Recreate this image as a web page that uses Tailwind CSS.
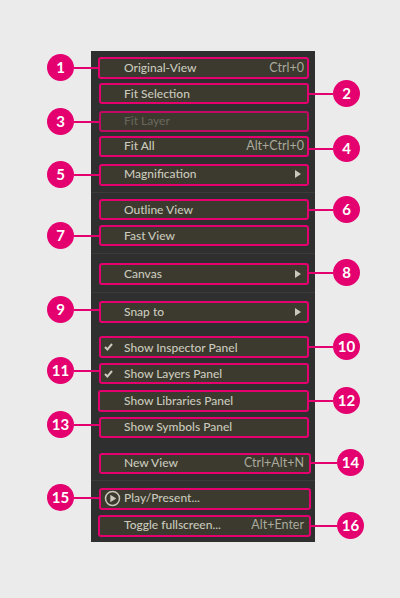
<!DOCTYPE html>
<html lang="en">
<head>
<meta charset="UTF-8">
<title>View menu</title>
<script src="https://cdn.jsdelivr.net/npm/@tailwindcss/browser@4"></script>
</head>
<body class="bg-[#ebebeb] font-['Lato',sans-serif]">
<div class="relative w-[400px] h-[598px] pt-[51px] pl-[91px] overflow-hidden">

  <!-- menu -->
  <div class="w-[224px] h-[491px] bg-[#2f2f2f] flow-root text-[12px] font-medium text-[#c9c9bd]">
    <div class="mt-[6px] ml-[7px] w-[211px] h-[22px] flex items-center justify-between pl-[24px] pr-[3px] bg-[#3c3a2e] border-2 border-[#e4006f] rounded-[3px]"><span>Original-View</span><span class="text-[#a9a99d] font-normal text-[12.5px]">Ctrl+0</span></div>
    <div class="mt-[4px] ml-[8px] w-[210px] h-[21px] flex items-center pl-[23px] bg-[#3c3a2e] border-2 border-[#e4006f] rounded-[3px]"><span>Fit Selection</span></div>
    <div class="mt-[7px] ml-[8px] w-[210px] h-[21px] flex items-center pl-[23px] pb-[2px] bg-[#3c3a2e] border-2 border-[#c20a64] rounded-[3px]"><span class="text-[#66665c]">Fit Layer</span></div>
    <div class="mt-[4px] ml-[8px] w-[210px] h-[21px] flex items-center justify-between pl-[23px] pr-[3px] pb-[1px] bg-[#3c3a2e] border-2 border-[#e4006f] rounded-[3px]"><span>Fit All</span><span class="text-[#a9a99d] font-normal text-[12.5px]">Alt+Ctrl+0</span></div>
    <div class="mt-[7px] ml-[8px] w-[210px] h-[22px] flex items-center justify-between pl-[23px] pr-[6px] pb-[2px] bg-[#3c3a2e] border-2 border-[#e4006f] rounded-[3px]"><span>Magnification</span><svg width="6" height="8" viewBox="0 0 6 8"><path d="M0 0 L6 4 L0 8 Z" fill="#c9c9bd"/></svg></div>
    <div class="mt-[6px] h-px bg-[#3a3a3a]"></div>
    <div class="mt-[6px] ml-[8px] w-[210px] h-[21px] flex items-center pl-[23px] bg-[#3c3a2e] border-2 border-[#e4006f] rounded-[3px]"><span>Outline View</span></div>
    <div class="mt-[5px] ml-[8px] w-[210px] h-[21px] flex items-center pl-[23px] bg-[#3c3a2e] border-2 border-[#e4006f] rounded-[3px]"><span>Fast View</span></div>
    <div class="mt-[7px] h-px bg-[#3a3a3a]"></div>
    <div class="mt-[9px] ml-[8px] w-[210px] h-[22px] flex items-center justify-between pl-[23px] pr-[6px] bg-[#3c3a2e] border-2 border-[#e4006f] rounded-[3px]"><span>Canvas</span><svg width="6" height="8" viewBox="0 0 6 8"><path d="M0 0 L6 4 L0 8 Z" fill="#c9c9bd"/></svg></div>
    <div class="mt-[7px] h-px bg-[#3a3a3a]"></div>
    <div class="mt-[8px] ml-[8px] w-[210px] h-[22px] flex items-center justify-between pl-[23px] pr-[6px] bg-[#3c3a2e] border-2 border-[#e4006f] rounded-[3px]"><span>Snap to</span><svg width="6" height="8" viewBox="0 0 6 8"><path d="M0 0 L6 4 L0 8 Z" fill="#c9c9bd"/></svg></div>
    <div class="mt-[13px] ml-[8px] w-[210px] h-[22px] flex items-center pl-[3px] bg-[#3c3a2e] border-2 border-[#e4006f] rounded-[3px]"><svg class="w-[9px] h-[8px] mr-[11px]" viewBox="0 0 9 8"><path d="M1 4 L3.4 6.5 L8 1" fill="none" stroke="#c9c9bd" stroke-width="2"/></svg><span class="mt-[1px]">Show Inspector Panel</span></div>
    <div class="mt-[5px] ml-[8px] w-[210px] h-[21px] flex items-center pl-[3px] bg-[#3c3a2e] border-2 border-[#e4006f] rounded-[3px]"><svg class="w-[9px] h-[8px] mr-[11px]" viewBox="0 0 9 8"><path d="M1 4 L3.4 6.5 L8 1" fill="none" stroke="#c9c9bd" stroke-width="2"/></svg><span>Show Layers Panel</span></div>
    <div class="mt-[6px] ml-[7px] w-[211px] h-[22px] flex items-center pl-[24px] pb-[1px] bg-[#3c3a2e] border-2 border-[#e4006f] rounded-[3px]"><span>Show Libraries Panel</span></div>
    <div class="mt-[5px] ml-[8px] w-[210px] h-[21px] flex items-center pl-[23px] pb-[2px] bg-[#3c3a2e] border-2 border-[#e4006f] rounded-[3px]"><span>Show Symbols Panel</span></div>
    <div class="mt-[15px] ml-[8px] w-[212px] h-[21px] flex items-center justify-between pl-[23px] pr-[5px] pb-[1px] bg-[#3c3a2e] border-2 border-[#e4006f] rounded-[3px]"><span>New View</span><span class="text-[#a9a99d] font-normal text-[12.5px]">Ctrl+Alt+N</span></div>
    <div class="mt-[6px] h-px bg-[#3a3a3a]"></div>
    <div class="mt-[7px] ml-[8px] w-[212px] h-[22px] flex items-center pl-[3px] pb-[1px] bg-[#3c3a2e] border-2 border-[#e4006f] rounded-[3px]"><svg class="w-[17px] h-[17px] mr-[3px]" viewBox="0 0 17 17"><circle cx="8.5" cy="8.5" r="7" fill="none" stroke="#c9c9bd" stroke-width="1.5"/><path d="M6.3 4.8 L12.3 8.5 L6.3 12.2 Z" fill="#c9c9bd"/></svg><span class="mb-[1px]">Play/Present...</span></div>
    <div class="mt-[5px] ml-[7px] w-[213px] h-[22px] flex items-center justify-between pl-[24px] pr-[5px] pb-[2px] bg-[#3c3a2e] border-2 border-[#e4006f] rounded-[3px]"><span>Toggle fullscreen...</span><span class="text-[#a9a99d] font-normal text-[12.5px]">Alt+Enter</span></div>
  </div>

  <!-- callouts -->
  <div class="absolute left-[47px] top-[54px] w-[52px] h-[27px] flex items-center"><span class="w-[27px] h-[27px] shrink-0 rounded-full bg-[#e4006f] text-white font-bold text-[15px] flex items-center justify-center">1</span><span class="flex-1 h-[2px] bg-[#e4006f]"></span></div>
  <div class="absolute left-[47px] top-[108px] w-[52px] h-[27px] flex items-center"><span class="w-[27px] h-[27px] shrink-0 rounded-full bg-[#e4006f] text-white font-bold text-[15px] flex items-center justify-center">3</span><span class="flex-1 h-[2px] bg-[#e4006f]"></span></div>
  <div class="absolute left-[47px] top-[161px] w-[52px] h-[27px] flex items-center"><span class="w-[27px] h-[27px] shrink-0 rounded-full bg-[#e4006f] text-white font-bold text-[15px] flex items-center justify-center">5</span><span class="flex-1 h-[2px] bg-[#e4006f]"></span></div>
  <div class="absolute left-[47px] top-[222px] w-[52px] h-[27px] flex items-center"><span class="w-[27px] h-[27px] shrink-0 rounded-full bg-[#e4006f] text-white font-bold text-[15px] flex items-center justify-center">7</span><span class="flex-1 h-[2px] bg-[#e4006f]"></span></div>
  <div class="absolute left-[47px] top-[296px] w-[52px] h-[27px] flex items-center"><span class="w-[27px] h-[27px] shrink-0 rounded-full bg-[#e4006f] text-white font-bold text-[15px] flex items-center justify-center">9</span><span class="flex-1 h-[2px] bg-[#e4006f]"></span></div>
  <div class="absolute left-[47px] top-[357px] w-[52px] h-[27px] flex items-center"><span class="w-[27px] h-[27px] shrink-0 rounded-full bg-[#e4006f] text-white font-bold text-[15px] flex items-center justify-center">11</span><span class="flex-1 h-[2px] bg-[#e4006f]"></span></div>
  <div class="absolute left-[47px] top-[411px] w-[52px] h-[27px] flex items-center"><span class="w-[27px] h-[27px] shrink-0 rounded-full bg-[#e4006f] text-white font-bold text-[15px] flex items-center justify-center">13</span><span class="flex-1 h-[2px] bg-[#e4006f]"></span></div>
  <div class="absolute left-[47px] top-[484px] w-[52px] h-[27px] flex items-center"><span class="w-[27px] h-[27px] shrink-0 rounded-full bg-[#e4006f] text-white font-bold text-[15px] flex items-center justify-center">15</span><span class="flex-1 h-[2px] bg-[#e4006f]"></span></div>

  <div class="absolute left-[309px] top-[80px] w-[51px] h-[27px] flex items-center"><span class="flex-1 h-[2px] bg-[#e4006f]"></span><span class="w-[27px] h-[27px] shrink-0 rounded-full bg-[#e4006f] text-white font-bold text-[15px] flex items-center justify-center">2</span></div>
  <div class="absolute left-[309px] top-[135px] w-[51px] h-[27px] flex items-center"><span class="flex-1 h-[2px] bg-[#e4006f]"></span><span class="w-[27px] h-[27px] shrink-0 rounded-full bg-[#e4006f] text-white font-bold text-[15px] flex items-center justify-center">4</span></div>
  <div class="absolute left-[309px] top-[196px] w-[51px] h-[27px] flex items-center"><span class="flex-1 h-[2px] bg-[#e4006f]"></span><span class="w-[27px] h-[27px] shrink-0 rounded-full bg-[#e4006f] text-white font-bold text-[15px] flex items-center justify-center">6</span></div>
  <div class="absolute left-[309px] top-[259px] w-[51px] h-[27px] flex items-center"><span class="flex-1 h-[2px] bg-[#e4006f]"></span><span class="w-[27px] h-[27px] shrink-0 rounded-full bg-[#e4006f] text-white font-bold text-[15px] flex items-center justify-center">8</span></div>
  <div class="absolute left-[309px] top-[333px] w-[51px] h-[27px] flex items-center"><span class="flex-1 h-[2px] bg-[#e4006f]"></span><span class="w-[27px] h-[27px] shrink-0 rounded-full bg-[#e4006f] text-white font-bold text-[15px] flex items-center justify-center">10</span></div>
  <div class="absolute left-[309px] top-[387px] w-[51px] h-[27px] flex items-center"><span class="flex-1 h-[2px] bg-[#e4006f]"></span><span class="w-[27px] h-[27px] shrink-0 rounded-full bg-[#e4006f] text-white font-bold text-[15px] flex items-center justify-center">12</span></div>
  <div class="absolute left-[311px] top-[449px] w-[53px] h-[27px] flex items-center"><span class="flex-1 h-[2px] bg-[#e4006f]"></span><span class="w-[27px] h-[27px] shrink-0 rounded-full bg-[#e4006f] text-white font-bold text-[15px] flex items-center justify-center">14</span></div>
  <div class="absolute left-[311px] top-[512px] w-[53px] h-[27px] flex items-center"><span class="flex-1 h-[2px] bg-[#e4006f]"></span><span class="w-[27px] h-[27px] shrink-0 rounded-full bg-[#e4006f] text-white font-bold text-[15px] flex items-center justify-center">16</span></div>
</div>
</body>
</html>
